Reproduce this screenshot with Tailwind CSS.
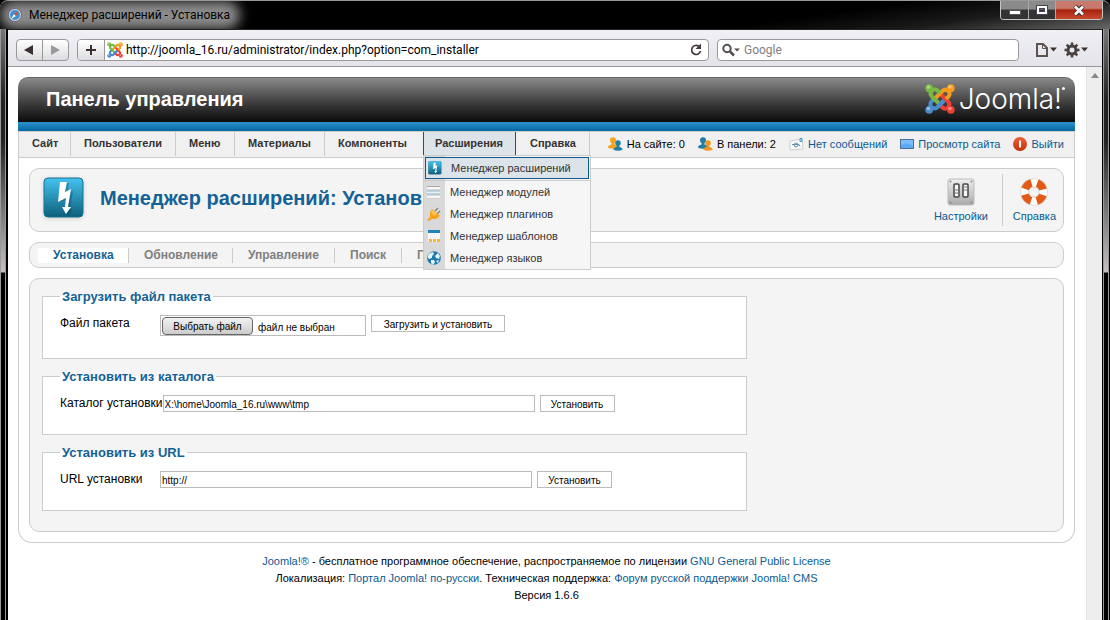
<!DOCTYPE html>
<html lang="ru">
<head>
<meta charset="utf-8">
<title>Менеджер расширений - Установка</title>
<script src="https://cdn.jsdelivr.net/npm/@tailwindcss/browser@4"></script>
</head>
<body class="flex min-h-screen flex-col bg-black font-['Liberation_Sans',sans-serif] text-[11px] leading-4 text-black">

<svg class="absolute size-0" aria-hidden="true">
  <defs>
    <symbol id="joomla" viewBox="0 0 30 30">
      <g fill="none" stroke-width="4" stroke-linecap="butt">
        <path stroke="#4a8ccb" d="M9 15 6.800 17.200Q3.800 20.400 6.800 23.200Q9.800 25.800 12.800 22.800L21 14.500"/>
        <path stroke="#ee4035" d="M15 21 17.200 23.200Q20.400 26.200 23.200 23.200Q25.800 20.200 22.800 17.200L14.500 9"/>
        <path stroke="#f89c1c" d="M21 15 23.200 12.800Q26.200 9.600 23.200 6.800Q20.200 4.200 17.200 7.200L9 15.500"/>
        <path stroke="#79b943" d="M15 9 12.800 6.800Q9.600 3.800 6.800 6.800Q4.200 9.800 7.200 12.800L15.500 21"/>
        <path stroke="#4a8ccb" d="M12.500 23 18 17.500"/>
      </g>
      <circle cx="4.200" cy="4.200" r="3.900" fill="#79b943"/><circle cx="25.800" cy="4.200" r="3.900" fill="#f89c1c"/>
      <circle cx="25.800" cy="25.800" r="3.900" fill="#ee4035"/><circle cx="4.200" cy="25.800" r="3.900" fill="#4a8ccb"/>
      <g fill="#fff" opacity=".4"><circle cx="3.500" cy="3" r="1.800"/><circle cx="25" cy="3" r="1.800"/><circle cx="25" cy="24.500" r="1.800"/><circle cx="3.500" cy="24.500" r="1.800"/></g>
    </symbol>
    <linearGradient id="sky" x1="0" y1="0" x2="0" y2="1"><stop offset="0" stop-color="#45c3f0"/><stop offset="1" stop-color="#0d5f7c"/></linearGradient>
    <linearGradient id="metal" x1="0" y1="0" x2="0" y2="1"><stop offset="0" stop-color="#efefef"/><stop offset="1" stop-color="#a9a9a9"/></linearGradient>
    <linearGradient id="red" x1="0" y1="0" x2="0" y2="1"><stop offset="0" stop-color="#f0603a"/><stop offset="1" stop-color="#c62f06"/></linearGradient>
    <symbol id="bolt" viewBox="0 0 42 42">
      <rect x="1" y="1" width="39" height="39" rx="4" fill="url(#sky)" stroke="#14708e"/>
      <path fill="#063b50" opacity=".35" d="M19 6h7l-2 10 6-2-3 18h3l-5 7-4-7h3l1-10-8 3z"/>
      <path fill="#fff" d="M17 5h7l-2 10 6-3-3 18h3l-5 7-4-7h3l1-9-8 4z"/>
    </symbol>
    <symbol id="person" viewBox="0 0 10 12"><circle cx="5" cy="3.200" r="3"/><path d="M3.500 5h3v2.500c2 .3 3.500 1.500 3.500 3.200Q5 13 0 10.700C0 9 1.500 7.800 3.500 7.500z"/></symbol>
  </defs>
</svg>

<header class="relative flex h-[29px] shrink-0 items-start justify-between overflow-hidden rounded-t-lg border-t border-[#999] bg-[linear-gradient(172deg,#000_70%,#1a1a1a_84%,#666_100%)] pl-2">
  <div class="absolute top-0 left-0 h-7 w-60 rounded-full bg-[#8c8c8c] blur-[6px]"></div>
  <div class="relative flex items-center gap-[7px] pt-1.5 font-['Roboto',sans-serif] text-xs">
    <svg class="size-3.5" viewBox="0 0 14 14"><circle cx="7" cy="7" r="6.500" fill="#cfd8de" stroke="#667"/><circle cx="7" cy="7" r="5" fill="#3f8fd6"/><path fill="#fff" d="m3 11 3-5 2 2z"/><path fill="#e4492f" d="m11 3-3 5-2-2z"/></svg>
    <h1>Менеджер расширений - Установка</h1>
  </div>
  <div class="relative mr-[7px] flex h-[19px] overflow-hidden rounded-b border border-t-0 border-[#c5c5c5]">
    <button aria-label="Свернуть" class="flex w-7 items-center justify-center border-r border-[#aaa] bg-linear-to-b from-[#8a8a8a] from-45% to-[#333] to-50%"><svg class="mt-1 h-[5px] w-3"><rect x=".5" y=".5" width="11" height="4" fill="#fff" stroke="#555"/></svg></button>
    <button aria-label="Развернуть" class="flex w-[27px] items-center justify-center border-r border-[#aaa] bg-linear-to-b from-[#8a8a8a] from-45% to-[#333] to-50%"><svg class="h-[10px] w-3" fill="none"><rect x="2" y="2" width="8" height="6" stroke="#445" stroke-width="4"/><rect x="2" y="2" width="8" height="6" stroke="#fff" stroke-width="2"/></svg></button>
    <button aria-label="Закрыть" class="flex w-[46px] items-center justify-center bg-linear-to-b from-[#c97a6c] from-40% via-[#a8200c] via-50% to-[#c8482c]"><svg class="h-[11px] w-3" viewBox="0 0 12 11" fill="none"><path d="m2 1 8 9M10 1 2 10" stroke="#433" stroke-width="4.500"/><path d="m2 1.500 8 8M10 1.500l-8 8" stroke="#fff" stroke-width="2.500"/></svg></button>
  </div>
</header>

<div class="flex grow">
  <div class="w-2 shrink-0 border-r-2 border-l border-r-black border-l-[#999] bg-[linear-gradient(#777_0px,#222_70px,#222_110px,#c5bfbf_243px,#000_244px)] shadow-[inset_-1px_0_#999]"></div>

  <div class="flex min-w-0 grow flex-col border-t border-[#222] bg-white">
    <nav aria-label="Браузер" class="flex h-[37px] items-center gap-2 border-b border-[#999] bg-linear-to-b from-[#f1f0f5] to-[#e4e3ea] pt-1 pr-[11px] pl-2 font-['Roboto',sans-serif] text-xs">
      <div class="flex h-[22px] w-[53px] shrink-0 rounded border border-[#999] bg-linear-to-b from-white to-[#dddce0]">
        <button aria-label="Назад" class="flex w-1/2 items-center justify-center border-r border-[#999]"><svg class="h-2.5 w-3"><path d="M1 5 10 0v10z" fill="#3a3030"/></svg></button>
        <button aria-label="Вперёд" class="flex w-1/2 items-center justify-center"><svg class="h-2.5 w-3"><path d="M11 5 2 0v10z" fill="#999"/></svg></button>
      </div>
      <div class="flex h-[22px] grow overflow-hidden rounded border border-[#999] bg-white">
        <button aria-label="Добавить закладку" class="flex w-[27px] items-center justify-center border-r border-[#999] bg-linear-to-b from-white to-[#dddce0]"><svg class="size-3"><path d="M6 1v10M1 6h10" stroke="#3a3030" stroke-width="2"/></svg></button>
        <svg class="mx-0.5 mt-0.5 size-4"><use href="#joomla"/></svg>
        <input aria-label="Адрес" class="ml-px min-w-0 grow bg-transparent outline-none" value="http://joomla_16.ru/administrator/index.php?option=com_installer">
        <button aria-label="Обновить" class="flex w-6 items-center justify-center"><svg class="size-3.5" fill="none"><path d="M10 3.500A4.500 4.500 0 1 0 11.500 8" stroke="#443c3c" stroke-width="1.700"/><path d="M12 .5v5.500H6.500z" fill="#443c3c"/></svg></button>
      </div>
      <label class="flex h-[22px] w-[302px] shrink-0 items-center rounded border border-[#999] bg-white pl-1">
        <svg class="h-3.5 w-5" fill="none"><circle cx="5" cy="5.500" r="3.700" stroke="#554d4d" stroke-width="2"/><path d="m8 8.500 4 4" stroke="#554d4d" stroke-width="2.500"/><path d="M12 5.500h6l-3 3z" fill="#554d4d"/></svg>
        <input aria-label="Поиск Google" class="ml-0.5 min-w-0 grow outline-none placeholder:text-[#808080]" placeholder="Google">
      </label>
      <button aria-label="Страница" class="ml-2 flex w-6 shrink-0 items-center"><svg class="h-4 w-6" fill="none"><path d="M2 2h6l4 4v8H2z" stroke="#5d5452" stroke-width="2"/><path d="M7.500 2v4.500H12" stroke="#5d5452"/><path d="M15 5.500h7l-3.500 4z" fill="#3a3030"/></svg></button>
      <button aria-label="Настройки браузера" class="-ml-1 flex w-7 shrink-0 items-center"><svg class="h-4 w-7" fill="none"><circle cx="9" cy="8" r="4" stroke="#4a4241" stroke-width="3"/><path d="M9 .5v3M9 12.500v3M1.500 8h3M13.500 8h3M3.700 2.700l2 2M12.300 11.300l2 2M3.700 13.300l2-2M12.300 4.700l2-2" stroke="#4a4241" stroke-width="2.600"/><path d="M18 5.500h7l-3.500 4z" fill="#3a3030"/></svg></button>
    </nav>

    <div class="flex grow">
      <div class="min-w-0 grow pt-2.5 pr-[11px] pl-2.5">
        <header class="flex h-[45px] items-center justify-between rounded-t-[10px] border-t border-[#666] bg-linear-to-b from-[#8a8a8a] to-[#0c0c0c] pr-2.5 pb-0.5 pl-7 text-white">
          <span class="text-xl font-bold">Панель управления</span>
          <span class="flex items-center gap-1">
            <svg class="size-[30px]"><use href="#joomla"/></svg>
            <span class="flex font-['Inter',sans-serif] text-[28px] leading-8 font-light">Joomla!<span class="mt-1 size-[3px] rounded-full bg-white"></span></span>
          </span>
        </header>
        <div class="h-[9px] bg-linear-to-b from-[#2a94cf] to-[#04679f]"></div>

        <div class="rounded-b-[14px] border border-t-0 border-[#ccc]">
          <div class="flex h-[27px] justify-between border-y border-[#ccc] bg-[#f0f0f0]">
            <nav aria-label="Меню" class="flex h-6 shrink-0 font-bold leading-[22px] text-[#333]">
              <a href="#" class="w-[52px] border-r border-[#ccc] pl-[13px]">Сайт</a>
              <a href="#" class="w-[105px] border-r border-[#ccc] pl-[13px]">Пользователи</a>
              <a href="#" class="w-[59px] border-r border-[#ccc] pl-[13px]">Меню</a>
              <a href="#" class="w-[90px] border-r border-[#ccc] pl-[13px]">Материалы</a>
              <a href="#" class="w-[98px] pl-[13px]">Компоненты</a>
              <div class="relative w-[93px]">
                <a href="#" class="block h-6 border-x border-[#0a5a8c] bg-[#dce4ea] pl-[11px]">Расширения</a>
                <ul class="absolute top-[23px] left-0 z-10 w-[168px] border border-[#ccc] bg-[linear-gradient(to_right,#d9d9d9_21px,#f6f6f6_21px)] font-normal">
                  <li class="border-b border-[#ccc] px-px pt-px pb-px"><a href="#" class="flex h-[22px] items-center gap-[9px] border border-[#0a5a8c] bg-[#dce4ea] pl-0.5"><svg class="size-[14px]"><use href="#bolt"/></svg>Менеджер расширений</a></li>
                  <li><a href="#" class="flex h-[22px] items-center gap-[9px] pl-[3px]"><svg class="size-[14px]"><rect y="1" width="13" height="3" fill="#f6f6f6"/><rect y="6" width="13" height="3" fill="#e9f2f6"/><rect y="11" width="13" height="3" fill="#f6f6f6"/><path d="M0 1.500h13M0 14h13" stroke="#aaa"/><path d="M0 6h13M0 9h13" stroke="#8bb9cf"/></svg>Менеджер модулей</a></li>
                  <li><a href="#" class="flex h-[22px] items-center gap-[9px] pl-[3px]"><svg class="size-[14px]"><path d="m8 4 3-3M10 7l3-3" stroke="#888" stroke-width="1.500"/><path d="m3 5 2-3 8 7-4 3-4 0-3 2-2-1 3-3z" fill="#f8a21b"/><path d="m4 5 1-2 5 4-3 2z" fill="#ffc652"/></svg>Менеджер плагинов</a></li>
                  <li><a href="#" class="flex h-[22px] items-center gap-[9px] pl-[3px]"><svg class="size-[14px]"><rect x="1" y="1" width="12" height="12" fill="#f6f6f6"/><rect x="1" y="1" width="12" height="3" fill="#2382b5"/><path d="M2 11.500h3M6 11.500h3M10 11.500h3" stroke="#f6b53d" stroke-width="3"/></svg>Менеджер шаблонов</a></li>
                  <li><a href="#" class="flex h-[22px] items-center gap-[9px] pl-[3px]"><svg class="size-[14px]"><circle cx="7" cy="7" r="6.800" fill="#2079ac"/><path fill="#e2f4fc" d="M2 2.500 6 1l1 2-2 2v2L2 8 .5 6zM8 5l3-3 2 3-1 3-3-1zM4 9l3 0 1 2-2 3-2-2zM9 10l3-1-1 3z"/></svg>Менеджер языков</a></li>
                </ul>
              </div>
              <a href="#" class="w-[74px] border-r border-[#ccc] pl-[14px]">Справка</a>
            </nav>
            <div class="flex shrink-0 items-center gap-[13px] pr-2.5 pb-0.5 text-[#0b5a91]">
              <span class="flex items-center gap-1 text-black"><svg class="h-3.5 w-[15px]"><use href="#person" width="10" height="12" fill="#f6a21c"/><use href="#person" x="5" y="3" width="10" height="11" fill="#1f7fa5"/></svg>На сайте: 0</span>
              <span class="flex items-center gap-1 text-black"><svg class="h-3.5 w-[15px]"><use href="#person" width="10" height="12" fill="#1f7fa5"/><use href="#person" x="5" y="3" width="10" height="11" fill="#f6951c"/></svg>В панели: 2</span>
              <a href="#" class="flex items-center gap-1"><svg class="h-3.5 w-[15px]"><path d="m1 4 12-2 1 10-13 1z" fill="#fafafa" stroke="#ccc"/><circle cx="7" cy="8" r="2" fill="none" stroke="#5b93ae"/><path d="M3 7.500h7l1 2" fill="none" stroke="#5b93ae"/><path d="M11 1.500h2v3h-2z" fill="none" stroke="#3d9bc8"/></svg>Нет сообщений</a>
              <a href="#" class="flex items-center gap-1"><svg class="h-[10px] w-3.5"><rect x=".5" y=".5" width="13" height="9" fill="#5ba9f5" stroke="#4a6f9c"/><path d="M1 6q6-4 12 1V1H1z" fill="#7dbdfb"/></svg>Просмотр сайта</a>
              <a href="#" class="flex items-center gap-1"><svg class="size-3.5"><circle cx="7" cy="7" r="7" fill="url(#red)"/><rect x="6" y="3.500" width="2" height="7" fill="#fff"/></svg>Выйти</a>
            </div>
          </div>

          <main class="flex flex-col gap-2.5 p-2.5">
            <section class="flex h-16 items-center justify-between rounded-[10px] border border-[#ccc] bg-[#f4f4f4] pr-[7px] pl-[13px] text-[#0b5a91]">
              <div class="flex items-center gap-[15px]">
                <svg class="mb-1 size-[42px] drop-shadow-sm"><use href="#bolt"/></svg>
                <h2 class="pb-1 text-xl font-bold text-[#146295]">Менеджер расширений: Установка</h2>
              </div>
              <div class="flex h-[52px] items-center">
                <a href="#" class="flex flex-col items-center pr-3.5">
                  <svg class="h-8 w-[30px]" viewBox="0 0 30 32"><rect x="2" y="3" width="26" height="26" rx="2" fill="url(#metal)" stroke="#bbb"/><g fill="#888"><circle cx="4.500" cy="5.500" r="1"/><circle cx="25.500" cy="5.500" r="1"/><circle cx="4.500" cy="26.500" r="1"/><circle cx="25.500" cy="26.500" r="1"/></g><g fill="#f6f6f6" stroke="#444" stroke-width="1.500"><rect x="8" y="8" width="5" height="13" rx="1"/><rect x="17" y="8" width="5" height="13" rx="1"/></g><path d="M8 14h5M8 17h5M17 11h5M17 14h5" stroke="#777"/></svg>
                  <span>Настройки</span>
                </a>
                <a href="#" class="flex h-full flex-col items-center justify-center border-l border-[#ccc] pl-2.5">
                  <svg class="h-8 w-[30px]" viewBox="0 0 30 32"><circle cx="15" cy="16" r="9.500" fill="none" stroke="#fff" stroke-width="8"/><circle cx="15" cy="16" r="9.500" fill="none" stroke="#e35a14" stroke-width="8" stroke-dasharray="9 5.923" stroke-dashoffset="-3"/><circle cx="15" cy="16" r="5" fill="#f4f4f4" stroke="#c9c9c9" stroke-width=".8"/><circle cx="15" cy="16" r="13.500" fill="none" stroke="#d0c8c4" stroke-width=".6"/></svg>
                  <span>Справка</span>
                </a>
              </div>
            </section>

            <nav aria-label="Разделы" class="flex h-[26px] items-center rounded-[10px] border border-[#ccc] bg-[#f4f4f4] pl-2 text-xs leading-[15px] font-bold text-[#808080]">
              <a href="#" class="w-[91px] border-r border-[#ccc] bg-white pl-[15px] leading-[15px] text-[#146295]">Установка</a>
              <a href="#" class="w-[104px] border-r border-[#ccc] pl-[15px] leading-[15px]">Обновление</a>
              <a href="#" class="w-[102px] border-r border-[#ccc] pl-[15px] leading-[15px]">Управление</a>
              <a href="#" class="w-[67px] border-r border-[#ccc] pl-[15px] leading-[15px]">Поиск</a>
              <a href="#" class="pl-[15px] leading-[15px]">Предупреждения</a>
            </nav>

            <form class="flex flex-col gap-2.5 rounded-[10px] border border-[#ccc] bg-[#f4f4f4] px-3 pt-2.5 pb-5" onsubmit="return false">
              <fieldset class="h-[70px] max-w-[705px] border border-[#ccc] bg-white px-[17px]">
                <legend class="px-0.5 text-[13px] leading-[15px] font-bold text-[#146295]">Загрузить файл пакета</legend>
                <div class="flex items-start gap-[5px] pt-[11px] text-[10px]">
                  <label for="package" class="-mr-[5px] min-w-[100px] text-xs">Файл пакета</label>
                  <div class="flex h-[21px] w-[206px] items-center gap-[5px] border border-[#bbb] px-px">
                    <button type="button" onclick="this.parentNode.querySelector('input').click()" class="h-[18px] w-[91px] rounded-sm border border-[#666] bg-linear-to-b from-[#f3f3f3] to-[#ccc] pt-px">Выбрать файл</button>
                    <span class="pt-1">файл не выбран</span>
                    <input id="package" type="file" class="sr-only">
                  </div>
                  <button class="h-[17px] w-[134px] border border-[#bbb] bg-white pt-px">Загрузить и установить</button>
                </div>
              </fieldset>
              <fieldset class="h-[66px] max-w-[705px] border border-[#ccc] bg-white px-[17px]">
                <legend class="px-0.5 text-[13px] leading-[15px] font-bold text-[#146295]">Установить из каталога</legend>
                <div class="flex items-start gap-[5px] pt-[11px] text-[10px]">
                  <label for="directory" class="-mr-[5px] min-w-[100px] text-xs">Каталог установки</label>
                  <input id="directory" class="h-[17px] w-[372px] border border-[#bbb] px-px pt-px" value="X:\home\Joomla_16.ru\www\tmp">
                  <button class="h-[17px] w-[75px] border border-[#bbb] bg-white pt-px">Установить</button>
                </div>
              </fieldset>
              <fieldset class="h-[66px] max-w-[705px] border border-[#ccc] bg-white px-[17px]">
                <legend class="px-0.5 text-[13px] leading-[15px] font-bold text-[#146295]">Установить из URL</legend>
                <div class="flex items-start gap-[5px] pt-[11px] text-[10px]">
                  <label for="url" class="-mr-[5px] min-w-[100px] text-xs">URL установки</label>
                  <input id="url" class="h-[17px] w-[372px] border border-[#bbb] px-px pt-px" value="http://">
                  <button class="h-[17px] w-[75px] border border-[#bbb] bg-white pt-px">Установить</button>
                </div>
              </fieldset>
            </form>
          </main>
        </div>

        <footer class="pt-2.5 text-center leading-[17px]">
          <p><a href="#" class="text-[#0b5a91]">Joomla!®</a> - бесплатное программное обеспечение, распространяемое по лицензии <a href="#" class="text-[#0b5a91]">GNU General Public License</a></p>
          <p>Локализация: <a href="#" class="text-[#0b5a91]">Портал Joomla! по-русски</a>. Техническая поддержка: <a href="#" class="text-[#0b5a91]">Форум русской поддержки Joomla! CMS</a></p>
          <p>Версия 1.6.6</p>
        </footer>
      </div>

      <div class="w-4 shrink-0 border-l border-[#e3e3e3] bg-[#eee] pt-1.5"><svg class="mx-auto h-[5px] w-2"><path d="M0 5 4 0l4 5z" fill="#888"/></svg></div>
    </div>
  </div>

  <div class="w-2 shrink-0 border-l border-black bg-[linear-gradient(#777_0px,#222_70px,#222_110px,#c5bfbf_243px,#000_244px)] shadow-[inset_1px_0_#999,inset_-1px_0_#000,inset_-2px_0_#999]"></div>
</div>
</body>
</html>
